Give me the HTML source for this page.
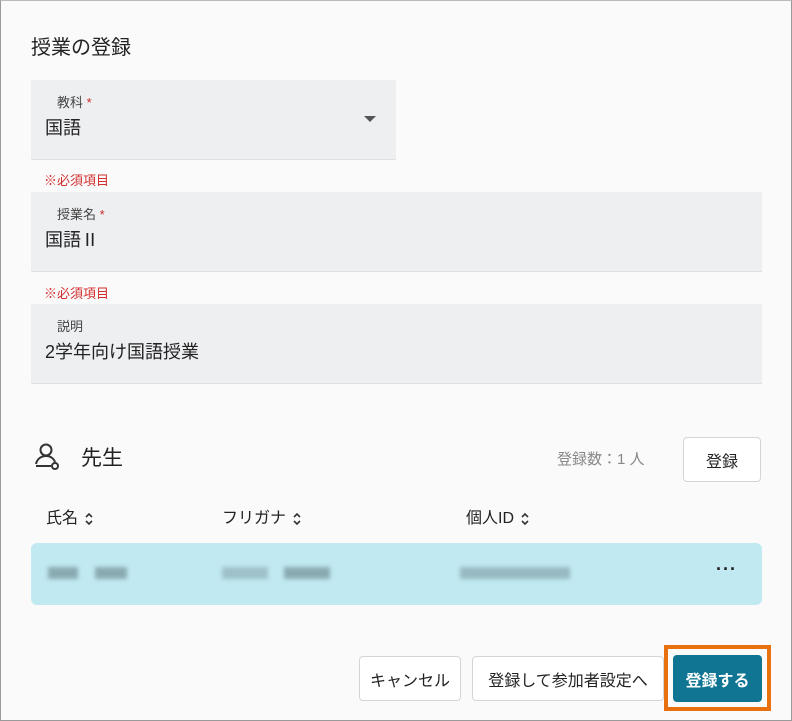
<!DOCTYPE html>
<html><head><meta charset="utf-8"><style>
*{box-sizing:border-box;margin:0;padding:0}
body{width:792px;height:721px;background:#fafafa;font-family:"Liberation Sans","Noto Sans CJK JP",sans-serif;color:#222;position:relative;overflow:hidden;border:1px solid #9a9a9a;border-top:1px solid #bbb}
.a{position:absolute}
.field{position:absolute;left:30px;background:#eeeff1;border-bottom:1px solid #e0e0e0}
.lab{position:absolute;left:26px;top:12px;font-size:13px;color:#444}
.lab b{color:#c62828;font-weight:normal}
.val{position:absolute;left:14px;top:34px;font-size:18px;color:#222}
.err{position:absolute;left:43px;font-size:13px;color:#d32f2f}
.btn{position:absolute;background:#fff;border:1px solid #d4d4d4;border-radius:4px;font-size:16px;display:flex;align-items:center;justify-content:center;color:#222}
.blur{position:absolute;height:12px;background:#7c9aa2;filter:blur(2px);opacity:.8}
.s{display:inline-block;vertical-align:middle;margin-left:6px}
</style></head><body>
<div class="a" style="left:30px;top:30px;font-size:20px">授業の登録</div>
<div class="field" style="top:79px;width:365px;height:80px"><div class="lab">教科 <b>*</b></div><div class="val">国語</div>
<div class="a" style="left:333px;top:36px;width:0;height:0;border-left:6px solid transparent;border-right:6px solid transparent;border-top:6px solid #555"></div></div>
<div class="err" style="top:169px">※必須項目</div>
<div class="field" style="top:191px;width:731px;height:80px"><div class="lab">授業名 <b>*</b></div><div class="val">国語Ⅱ</div></div>
<div class="err" style="top:282px">※必須項目</div>
<div class="field" style="top:303px;width:731px;height:80px"><div class="lab">説明</div><div class="val">2学年向け国語授業</div></div>
<svg class="a" style="left:33px;top:441px" width="28" height="28" viewBox="0 0 28 28" fill="none" stroke="#333" stroke-width="2"><circle cx="12" cy="8" r="5.5"/><path d="M2 22c1-5 5-8 10-8s8 3 9 6"/><path d="M2 24h15"/><circle cx="21" cy="24" r="3"/></svg>
<div class="a" style="left:80px;top:441px;font-size:21px">先生</div>
<div class="a" style="left:556px;top:447px;font-size:15px;color:#888">登録数：1 人</div>
<div class="btn" style="left:682px;top:436px;width:78px;height:45px">登録</div>
<div class="a" style="left:45px;top:503px;font-size:16px">氏名<svg class="s" width="10" height="14" viewBox="0 0 10 14" fill="none" stroke="#333" stroke-width="1.6"><path d="M2 5l3-3 3 3M2 9l3 3 3-3"/></svg></div>
<div class="a" style="left:221px;top:503px;font-size:16px">フリガナ<svg class="s" width="10" height="14" viewBox="0 0 10 14" fill="none" stroke="#333" stroke-width="1.6"><path d="M2 5l3-3 3 3M2 9l3 3 3-3"/></svg></div>
<div class="a" style="left:465px;top:503px;font-size:16px">個人ID<svg class="s" width="10" height="14" viewBox="0 0 10 14" fill="none" stroke="#333" stroke-width="1.6"><path d="M2 5l3-3 3 3M2 9l3 3 3-3"/></svg></div>
<div class="a" style="left:30px;top:542px;width:731px;height:62px;background:#c1e9f1;border-radius:6px"></div>
<div class="blur" style="left:47px;top:566px;width:30px"></div><div class="blur" style="left:94px;top:566px;width:32px"></div>
<div class="blur" style="left:221px;top:566px;width:46px;opacity:.5"></div><div class="blur" style="left:283px;top:566px;width:46px"></div>
<div class="blur" style="left:459px;top:566px;width:110px;opacity:.6"></div>
<div class="a" style="left:715px;top:558px;font-size:18px;font-weight:bold;letter-spacing:1px">···</div>
<div class="btn" style="left:358px;top:655px;width:102px;height:45px">キャンセル</div>
<div class="btn" style="left:471px;top:655px;width:192px;height:45px">登録して参加者設定へ</div>
<div class="a" style="left:663px;top:644px;width:107px;height:66px;border:4px solid #e8700f"></div>
<div class="a" style="left:672px;top:654px;width:89px;height:47px;background:#107592;border-radius:4px;color:#fff;font-size:16px;font-weight:bold;display:flex;align-items:center;justify-content:center">登録する</div>
</body></html>
